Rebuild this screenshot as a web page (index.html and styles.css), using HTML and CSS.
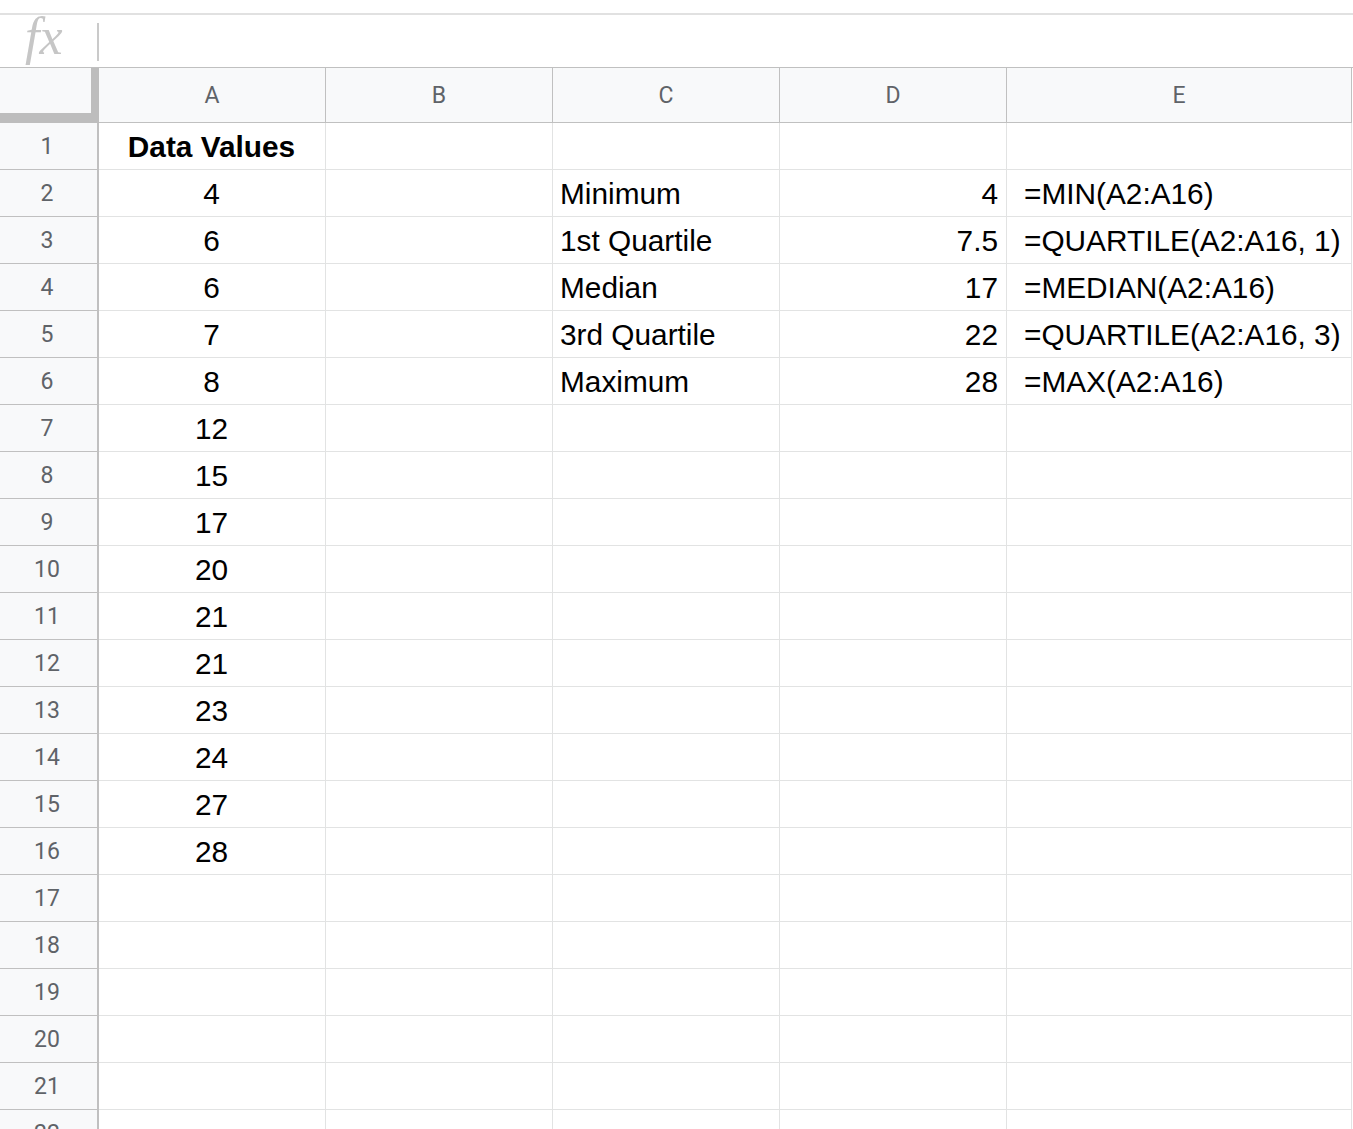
FILE: index.html
```html
<!DOCTYPE html>
<html lang="en">

<head>
    <meta charset="UTF-8">
    <meta name="viewport" content="width=device-width, initial-scale=1.0">
    <title>Quartiles</title>
    <link rel="stylesheet" href="styles.css">
</head>

<body>

    <div class="formula-bar">
        <span class="fx">fx</span>
        <span class="fx-sep"></span>
    </div>

    <div class="sheet">
        <!-- column headers -->
        <div class="row head">
            <div class="corner"></div>
            <div class="col-head">A</div>
            <div class="col-head">B</div>
            <div class="col-head">C</div>
            <div class="col-head">D</div>
            <div class="col-head">E</div>
        </div>

        <div class="row">
            <div class="row-head">1</div>
            <div class="cell center bold">Data Values</div>
            <div class="cell"></div>
            <div class="cell"></div>
            <div class="cell"></div>
            <div class="cell"></div>
        </div>
        <div class="row">
            <div class="row-head">2</div>
            <div class="cell center">4</div>
            <div class="cell"></div>
            <div class="cell">Minimum</div>
            <div class="cell right">4</div>
            <div class="cell formula">=MIN(A2:A16)</div>
        </div>
        <div class="row">
            <div class="row-head">3</div>
            <div class="cell center">6</div>
            <div class="cell"></div>
            <div class="cell">1st Quartile</div>
            <div class="cell right">7.5</div>
            <div class="cell formula">=QUARTILE(A2:A16, 1)</div>
        </div>
        <div class="row">
            <div class="row-head">4</div>
            <div class="cell center">6</div>
            <div class="cell"></div>
            <div class="cell">Median</div>
            <div class="cell right">17</div>
            <div class="cell formula">=MEDIAN(A2:A16)</div>
        </div>
        <div class="row">
            <div class="row-head">5</div>
            <div class="cell center">7</div>
            <div class="cell"></div>
            <div class="cell">3rd Quartile</div>
            <div class="cell right">22</div>
            <div class="cell formula">=QUARTILE(A2:A16, 3)</div>
        </div>
        <div class="row">
            <div class="row-head">6</div>
            <div class="cell center">8</div>
            <div class="cell"></div>
            <div class="cell">Maximum</div>
            <div class="cell right">28</div>
            <div class="cell formula">=MAX(A2:A16)</div>
        </div>
        <div class="row">
            <div class="row-head">7</div>
            <div class="cell center">12</div>
            <div class="cell"></div><div class="cell"></div><div class="cell"></div><div class="cell"></div>
        </div>
        <div class="row">
            <div class="row-head">8</div>
            <div class="cell center">15</div>
            <div class="cell"></div><div class="cell"></div><div class="cell"></div><div class="cell"></div>
        </div>
        <div class="row">
            <div class="row-head">9</div>
            <div class="cell center">17</div>
            <div class="cell"></div><div class="cell"></div><div class="cell"></div><div class="cell"></div>
        </div>
        <div class="row">
            <div class="row-head">10</div>
            <div class="cell center">20</div>
            <div class="cell"></div><div class="cell"></div><div class="cell"></div><div class="cell"></div>
        </div>
        <div class="row">
            <div class="row-head">11</div>
            <div class="cell center">21</div>
            <div class="cell"></div><div class="cell"></div><div class="cell"></div><div class="cell"></div>
        </div>
        <div class="row">
            <div class="row-head">12</div>
            <div class="cell center">21</div>
            <div class="cell"></div><div class="cell"></div><div class="cell"></div><div class="cell"></div>
        </div>
        <div class="row">
            <div class="row-head">13</div>
            <div class="cell center">23</div>
            <div class="cell"></div><div class="cell"></div><div class="cell"></div><div class="cell"></div>
        </div>
        <div class="row">
            <div class="row-head">14</div>
            <div class="cell center">24</div>
            <div class="cell"></div><div class="cell"></div><div class="cell"></div><div class="cell"></div>
        </div>
        <div class="row">
            <div class="row-head">15</div>
            <div class="cell center">27</div>
            <div class="cell"></div><div class="cell"></div><div class="cell"></div><div class="cell"></div>
        </div>
        <div class="row">
            <div class="row-head">16</div>
            <div class="cell center">28</div>
            <div class="cell"></div><div class="cell"></div><div class="cell"></div><div class="cell"></div>
        </div>
        <div class="row">
            <div class="row-head">17</div>
            <div class="cell"></div><div class="cell"></div><div class="cell"></div><div class="cell"></div><div class="cell"></div>
        </div>
        <div class="row">
            <div class="row-head">18</div>
            <div class="cell"></div><div class="cell"></div><div class="cell"></div><div class="cell"></div><div class="cell"></div>
        </div>
        <div class="row">
            <div class="row-head">19</div>
            <div class="cell"></div><div class="cell"></div><div class="cell"></div><div class="cell"></div><div class="cell"></div>
        </div>
        <div class="row">
            <div class="row-head">20</div>
            <div class="cell"></div><div class="cell"></div><div class="cell"></div><div class="cell"></div><div class="cell"></div>
        </div>
        <div class="row">
            <div class="row-head">21</div>
            <div class="cell"></div><div class="cell"></div><div class="cell"></div><div class="cell"></div><div class="cell"></div>
        </div>
        <div class="row">
            <div class="row-head">22</div>
            <div class="cell"></div><div class="cell"></div><div class="cell"></div><div class="cell"></div><div class="cell"></div>
        </div>
    </div>

</body>

</html>
```

FILE: styles.css
```css
* {
    margin: 0;
    padding: 0;
    box-sizing: border-box;
}

html,
body {
    overflow: hidden;
    background: #fff;
}

body {
    height: 1129px;
}

/* 公式栏 */
.formula-bar {
    margin-top: 13px;
    height: 54px;
    border-top: 2px solid #e1e1e1;
    display: flex;
    align-items: center;
}

.fx {
    width: 97px;
    padding-left: 25px;
    font-family: "Liberation Serif", serif;
    font-style: italic;
    font-size: 52px;
    line-height: 1;
    color: #c6c6c6;
    margin-top: -8px;
}

.fx-sep {
    width: 2px;
    height: 38px;
    background: #cacaca;
    margin-top: 2px;
}

/* 表格 */
.sheet {
    border-top: 1px solid #c0c0c0;
}

.row {
    display: grid;
    grid-template-columns: 99px 227px 227px 227px 227px 345px;
    height: 47px;
}

.row.head {
    height: 55px;
}

.corner {
    background: #f8f9fa;
    border-right: 8px solid #bdbdbd;
    border-bottom: 10px solid #bdbdbd;
}

.col-head,
.row-head {
    display: flex;
    align-items: center;
    justify-content: center;
    background: #f8f9fa;
    border-right: 1px solid #c0c0c0;
    border-bottom: 1px solid #c0c0c0;
    font-family: Roboto, "Noto Sans", sans-serif;
    font-size: 23px;
    color: #5f6368;
}

.row-head {
    border-right: 2px solid #c0c0c0;
    padding-right: 3px;
}

.cell {
    display: flex;
    align-items: center;
    padding: 2px 8px 0 7px;
    border-right: 1px solid #e2e3e3;
    border-bottom: 1px solid #e2e3e3;
    font-family: "Liberation Sans", Arial, sans-serif;
    font-size: 29.8px;
    color: #000;
    white-space: nowrap;
    overflow: hidden;
}

.cell.center {
    justify-content: center;
}

.cell.right {
    justify-content: flex-end;
}

.cell.bold {
    font-weight: bold;
}

.cell.formula {
    padding-left: 17px;
}
```
